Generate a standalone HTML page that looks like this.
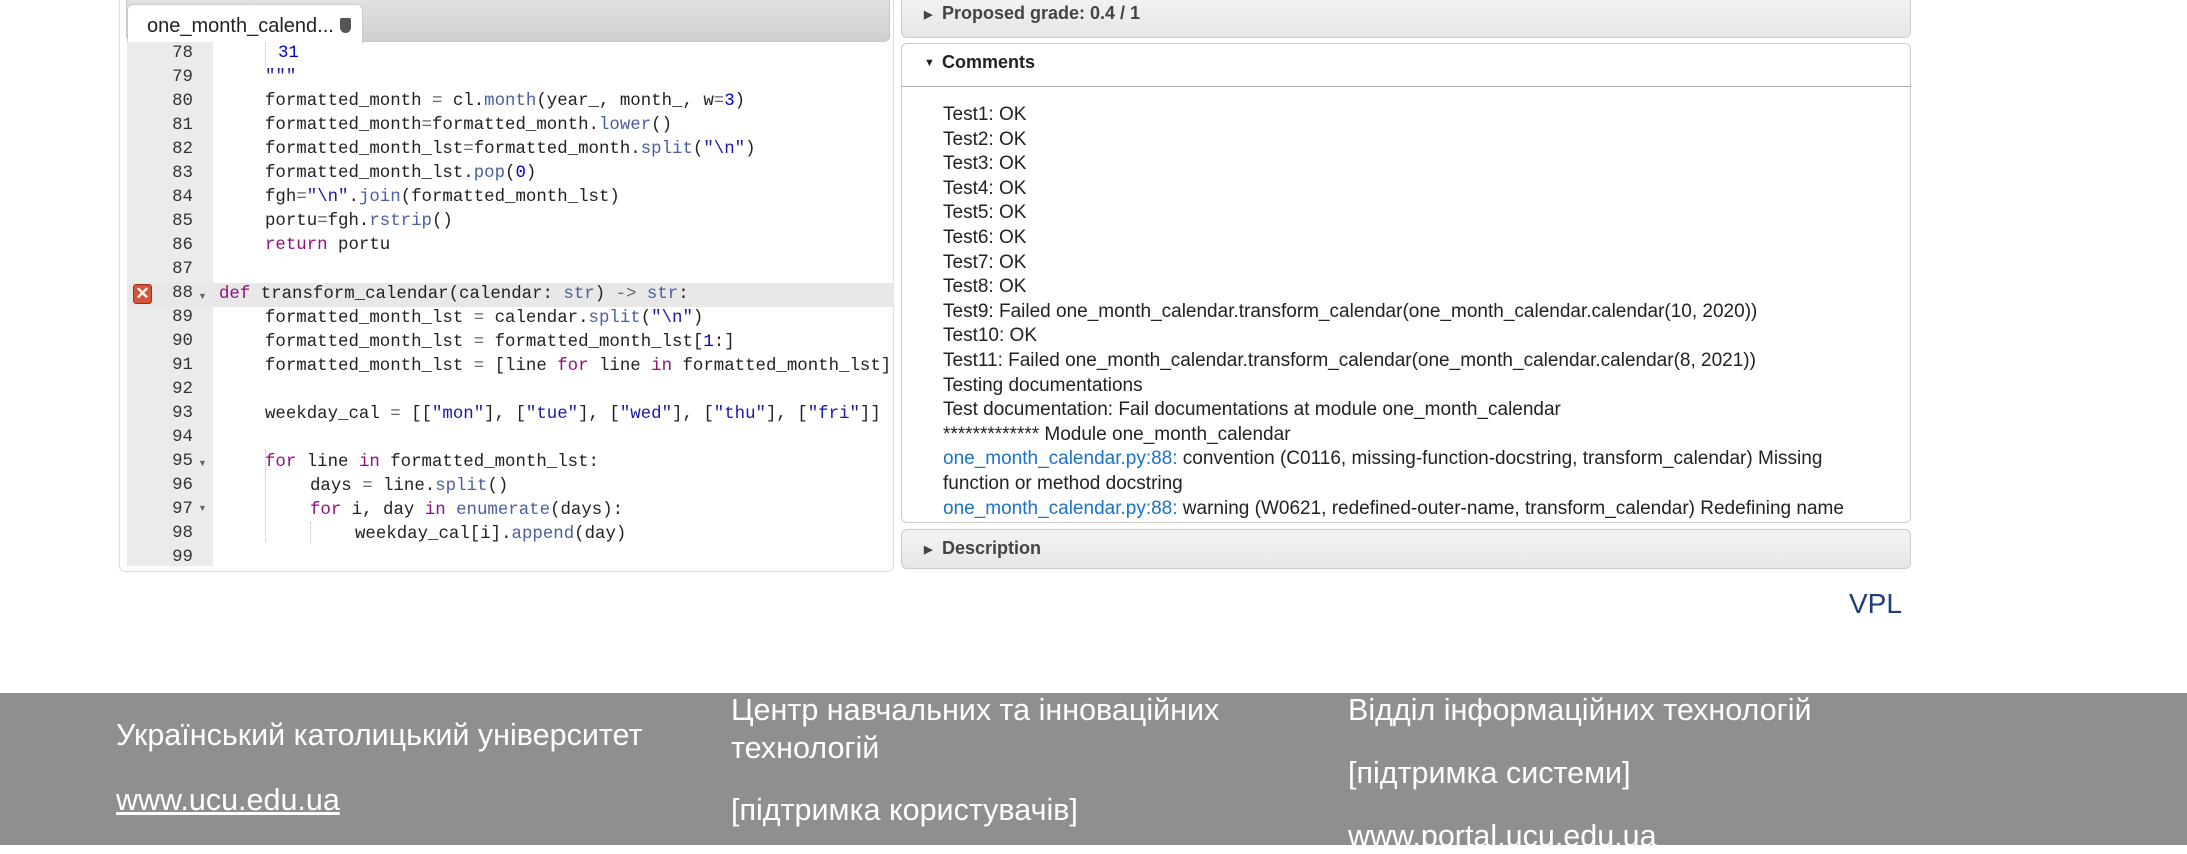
<!DOCTYPE html>
<html><head><meta charset="utf-8"><style>
*{margin:0;padding:0;box-sizing:border-box}
body{width:2187px;height:845px;position:relative;background:#fff;font-family:"Liberation Sans",sans-serif;overflow:hidden}
.ed{position:absolute;left:119px;top:-10px;width:775px;height:582px;border:1px solid #ddd;border-radius:6px;background:#fff}
.tabbar{position:absolute;left:126px;top:-6px;width:764px;height:48px;background:linear-gradient(#e4e4e4,#cfcfcf);border:1px solid #c5c5c5;border-radius:6px}
.tab{position:absolute;left:127px;top:4px;width:236px;height:40px;background:#fff;border:1px solid #ccc;border-bottom:none;border-radius:6px 6px 0 0;font-size:20px;color:#222;padding:10px 0 0 19px}
.gut{position:absolute;left:127px;top:42px;width:86px;height:524px;background:#ebebeb}
.code{position:absolute;left:0;top:42px;font-family:"Liberation Mono",monospace;font-size:17.4px;color:#222}
.ln{position:absolute;height:24px;line-height:24px;white-space:pre}
.num{position:absolute;width:66px;left:127px;text-align:right;color:#333;font-family:"Liberation Mono",monospace;font-size:17.4px;line-height:24px}
.k{color:#930f80}.f{color:#4b5fa0}.s{color:#1a1aa6}.n{color:#0000cd}.o{color:#666}
.hl{position:absolute;left:127px;top:283px;width:767px;height:24px;background:#e8e8e8}
.err{position:absolute;left:133px;top:284px;width:19px;height:20px;background:#d9533b;border:1px solid #a03020;border-radius:3px;color:#fff;font-size:17px;font-weight:bold;text-align:center;line-height:18px}
.fold{position:absolute;left:198px;font-size:9px;color:#666}
.guide{position:absolute;border-left:1px dotted #bbb}
.hdr{position:absolute;left:901px;width:1010px;border:1px solid #ccc;border-radius:6px;background:linear-gradient(#f4f4f4,#e6e6e6);font-weight:bold;font-size:18px;color:#444;padding-left:40px}
.tri{position:absolute;left:22px;font-size:11px}
.cbody{position:absolute;left:901px;top:86px;width:1010px;height:437px;border:1px solid #ccc;border-top:1px solid #aaa;border-radius:0 0 6px 6px;background:#fff}
.ct{position:absolute;left:943px;top:103px;font-size:19px;line-height:24.6px;color:#222}
.ct a{color:#1a73c8;text-decoration:none}
.foot{position:absolute;left:0;top:693px;width:2187px;height:152px;background:#8f8f8f;color:#fff;font-size:30.5px}
.foot div{position:absolute;white-space:nowrap}
</style></head><body>
<div class="ed"></div>
<div class="tabbar"></div>
<div class="tab">one_month_calend...<span style="display:inline-block;width:11px;height:15px;background:#555;border-radius:2px 2px 6px 6px;margin-left:6px;vertical-align:-1px"></span></div>
<div class="gut"></div>
<div class="hl"></div>
<div class="err">✕</div>
<div class="guide" style="left:265px;top:43px;height:22px"></div>
<div class="guide" style="left:265px;top:450px;height:92px"></div>
<div class="guide" style="left:310px;top:522px;height:22px"></div>
<div class="fold" style="top:291px">▼</div>
<div class="fold" style="top:458px">▼</div>
<div class="fold" style="top:503px">▼</div>
<div class="code">
<div class="ln" style="left:278px;top:0"><span class="n">31</span></div>
<div class="ln" style="left:265px;top:24px"><span class="s">"""</span></div>
<div class="ln" style="left:265px;top:48px">formatted_month <span class="o">=</span> cl.<span class="f">month</span>(year_, month_, w<span class="o">=</span><span class="n">3</span>)</div>
<div class="ln" style="left:265px;top:72px">formatted_month<span class="o">=</span>formatted_month.<span class="f">lower</span>()</div>
<div class="ln" style="left:265px;top:96px">formatted_month_lst<span class="o">=</span>formatted_month.<span class="f">split</span>(<span class="s">"\n"</span>)</div>
<div class="ln" style="left:265px;top:120px">formatted_month_lst.<span class="f">pop</span>(<span class="n">0</span>)</div>
<div class="ln" style="left:265px;top:144px">fgh<span class="o">=</span><span class="s">"\n"</span>.<span class="f">join</span>(formatted_month_lst)</div>
<div class="ln" style="left:265px;top:168px">portu<span class="o">=</span>fgh.<span class="f">rstrip</span>()</div>
<div class="ln" style="left:265px;top:192px"><span class="k">return</span> portu</div>
<div class="ln" style="left:219px;top:241px"><span class="k">def</span> transform_calendar(calendar: <span class="f">str</span>) <span class="o">-&gt;</span> <span class="f">str</span>:</div>
<div class="ln" style="left:265px;top:265px">formatted_month_lst <span class="o">=</span> calendar.<span class="f">split</span>(<span class="s">"\n"</span>)</div>
<div class="ln" style="left:265px;top:289px">formatted_month_lst <span class="o">=</span> formatted_month_lst[<span class="n">1</span>:]</div>
<div class="ln" style="left:265px;top:313px;width:629px;overflow:hidden">formatted_month_lst <span class="o">=</span> [line <span class="k">for</span> line <span class="k">in</span> formatted_month_lst]</div>
<div class="ln" style="left:265px;top:361px;width:629px;overflow:hidden">weekday_cal <span class="o">=</span> [[<span class="s">"mon"</span>], [<span class="s">"tue"</span>], [<span class="s">"wed"</span>], [<span class="s">"thu"</span>], [<span class="s">"fri"</span>]]</div>
<div class="ln" style="left:265px;top:409px"><span class="k">for</span> line <span class="k">in</span> formatted_month_lst:</div>
<div class="ln" style="left:310px;top:433px">days <span class="o">=</span> line.<span class="f">split</span>()</div>
<div class="ln" style="left:310px;top:457px"><span class="k">for</span> i, day <span class="k">in</span> <span class="f">enumerate</span>(days):</div>
<div class="ln" style="left:355px;top:481px">weekday_cal[i].<span class="f">append</span>(day)</div>
</div>
<div class="num" style="top:42px">78<br>79<br>80<br>81<br>82<br>83<br>84<br>85<br>86<br>87<br>88<br>89<br>90<br>91<br>92<br>93<br>94<br>95<br>96<br>97<br>98<br>99</div>

<div class="hdr" style="top:-6px;height:44px;padding-top:8px"><span class="tri" style="top:13px">▶</span>Proposed grade: 0.4 / 1</div>
<div class="hdr" style="top:43px;height:44px;background:#fff;color:#222;padding-top:8px;border-radius:6px 6px 0 0"><span class="tri" style="top:13px">▼</span>Comments</div>
<div class="cbody"></div>
<div class="ct">Test1: OK<br>Test2: OK<br>Test3: OK<br>Test4: OK<br>Test5: OK<br>Test6: OK<br>Test7: OK<br>Test8: OK<br>Test9: Failed one_month_calendar.transform_calendar(one_month_calendar.calendar(10, 2020))<br>Test10: OK<br>Test11: Failed one_month_calendar.transform_calendar(one_month_calendar.calendar(8, 2021))<br>Testing documentations<br>Test documentation: Fail documentations at module one_month_calendar<br>************* Module one_month_calendar<br><a>one_month_calendar.py:88:</a> convention (C0116, missing-function-docstring, transform_calendar) Missing<br>function or method docstring<br><a>one_month_calendar.py:88:</a> warning (W0621, redefined-outer-name, transform_calendar) Redefining name</div>
<div class="hdr" style="top:529px;height:40px;padding-top:8px"><span class="tri" style="top:13px">▶</span>Description</div>
<div style="position:absolute;left:1849px;top:588px;font-size:28px;color:#1f3d7a">VPL</div>

<div class="foot">
<div style="left:116px;top:25px">Український католицький університет</div>
<div style="left:116px;top:90px;text-decoration:underline">www.ucu.edu.ua</div>
<div style="left:731px;top:-2px;line-height:38px">Центр навчальних та інноваційних<br>технологій</div>
<div style="left:731px;top:100px">[підтримка користувачів]</div>
<div style="left:1348px;top:0px">Відділ інформаційних технологій</div>
<div style="left:1348px;top:63px">[підтримка системи]</div>
<div style="left:1348px;top:126px">www.portal.ucu.edu.ua</div>
</div>
</body></html>
